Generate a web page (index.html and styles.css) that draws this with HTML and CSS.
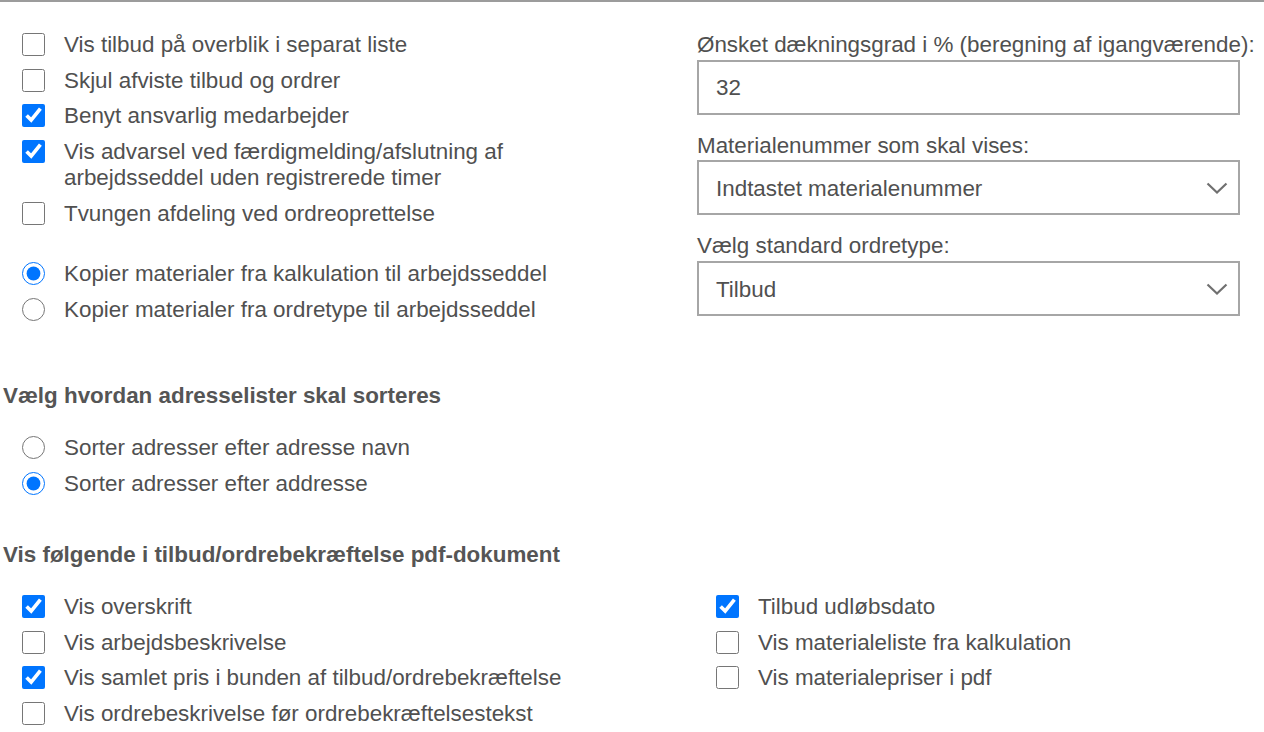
FILE: index.html
```html
<!DOCTYPE html>
<html lang="da">
<head>
<meta charset="utf-8">
<title>Indstillinger</title>
<link rel="stylesheet" href="styles.css">
</head>
<body>
<div class="topline"></div>
<div class="page">
  <section class="grid top">
    <div class="col-left">
      <div class="group">
        <label class="row"><input type="checkbox"><span class="txt">Vis tilbud på overblik i separat liste</span></label>
        <label class="row"><input type="checkbox"><span class="txt">Skjul afviste tilbud og ordrer</span></label>
        <label class="row"><input type="checkbox" checked><span class="txt">Benyt ansvarlig medarbejder</span></label>
        <label class="row"><input type="checkbox" checked><span class="txt">Vis advarsel ved færdigmelding/afslutning af arbejdsseddel uden registrerede timer</span></label>
        <label class="row"><input type="checkbox"><span class="txt">Tvungen afdeling ved ordreoprettelse</span></label>
      </div>
      <div class="group radios">
        <label class="row"><input type="radio" name="kopi" checked><span class="txt">Kopier materialer fra kalkulation til arbejdsseddel</span></label>
        <label class="row"><input type="radio" name="kopi"><span class="txt">Kopier materialer fra ordretype til arbejdsseddel</span></label>
      </div>
    </div>
    <div class="col-right">
      <div class="field">
        <div class="flabel">Ønsket dækningsgrad i % (beregning af igangværende):</div>
        <div class="box"><span>32</span></div>
      </div>
      <div class="field">
        <div class="flabel">Materialenummer som skal vises:</div>
        <div class="box select"><span>Indtastet materialenummer</span>
          <svg class="chev" width="22" height="12" viewBox="0 0 22 12"><path d="M1.5 1.5 L11 10.5 L20.5 1.5" fill="none" stroke="#707070" stroke-width="2.2"/></svg>
        </div>
      </div>
      <div class="field">
        <div class="flabel">Vælg standard ordretype:</div>
        <div class="box select"><span>Tilbud</span>
          <svg class="chev" width="22" height="12" viewBox="0 0 22 12"><path d="M1.5 1.5 L11 10.5 L20.5 1.5" fill="none" stroke="#707070" stroke-width="2.2"/></svg>
        </div>
      </div>
    </div>
  </section>

  <h2 class="heading first">Vælg hvordan adresselister skal sorteres</h2>
  <div class="group pad">
    <label class="row"><input type="radio" name="sort"><span class="txt">Sorter adresser efter adresse navn</span></label>
    <label class="row"><input type="radio" name="sort" checked><span class="txt">Sorter adresser efter addresse</span></label>
  </div>

  <h2 class="heading second">Vis følgende i tilbud/ordrebekræftelse pdf-dokument</h2>
  <section class="grid bottom">
    <div class="group pad">
      <label class="row"><input type="checkbox" checked><span class="txt">Vis overskrift</span></label>
      <label class="row"><input type="checkbox"><span class="txt">Vis arbejdsbeskrivelse</span></label>
      <label class="row"><input type="checkbox" checked><span class="txt">Vis samlet pris i bunden af tilbud/ordrebekræftelse</span></label>
      <label class="row"><input type="checkbox"><span class="txt">Vis ordrebeskrivelse før ordrebekræftelsestekst</span></label>
    </div>
    <div class="group pad">
      <label class="row"><input type="checkbox" checked><span class="txt">Tilbud udløbsdato</span></label>
      <label class="row"><input type="checkbox"><span class="txt">Vis materialeliste fra kalkulation</span></label>
      <label class="row"><input type="checkbox"><span class="txt">Vis materialepriser i pdf</span></label>
    </div>
  </section>
</div>
</body>
</html>
```
FILE: styles.css
```css
html, body {
  margin: 0;
  padding: 0;
  background: #fff;
}
body {
  font-family: "Liberation Sans", Arial, sans-serif;
  font-size: 22.4px;
  line-height: 25.7px;
  color: #505050;
  overflow: hidden;
}
.topline {
  height: 2px;
  background: #9c9c9c;
}
.grid {
  display: grid;
  grid-template-columns: 694px 1fr;
}
.top {
  padding-top: 25px;
}
.col-left {
  padding-left: 22px;
}
.group {
  display: flex;
  flex-direction: column;
}
.pad {
  padding-left: 22px;
}
.radios {
  margin-top: 25px;
}
.row {
  display: flex;
  align-items: flex-start;
  gap: 19px;
  padding: 5px 0;
  cursor: pointer;
}
.row input {
  width: 23px;
  height: 23px;
  margin: 1px 0 0 0;
  flex: none;
  accent-color: #0075ff;
}
.txt {
  max-width: 540px;
}
.col-right {
  padding-left: 3px;
  padding-top: 5px;
  width: 543px;
}
.field {
  margin-bottom: 18px;
}
.flabel {
  white-space: nowrap;
  margin-bottom: 2px;
}
.box {
  height: 51px;
  border: 2px solid #a6a6a6;
  display: flex;
  align-items: center;
  justify-content: space-between;
  padding: 0 10px 0 17px;
}
.box span {
  margin-top: 2px;
}
.chev {
  display: block;
}
.heading {
  font-size: 22.4px;
  line-height: 25.7px;
  font-weight: bold;
  color: #555;
  margin: 0;
  padding-left: 3px;
}
.heading.first {
  margin-top: 49px;
  margin-bottom: 21px;
}
.heading.second {
  margin-top: 41px;
  margin-bottom: 21px;
}
```
